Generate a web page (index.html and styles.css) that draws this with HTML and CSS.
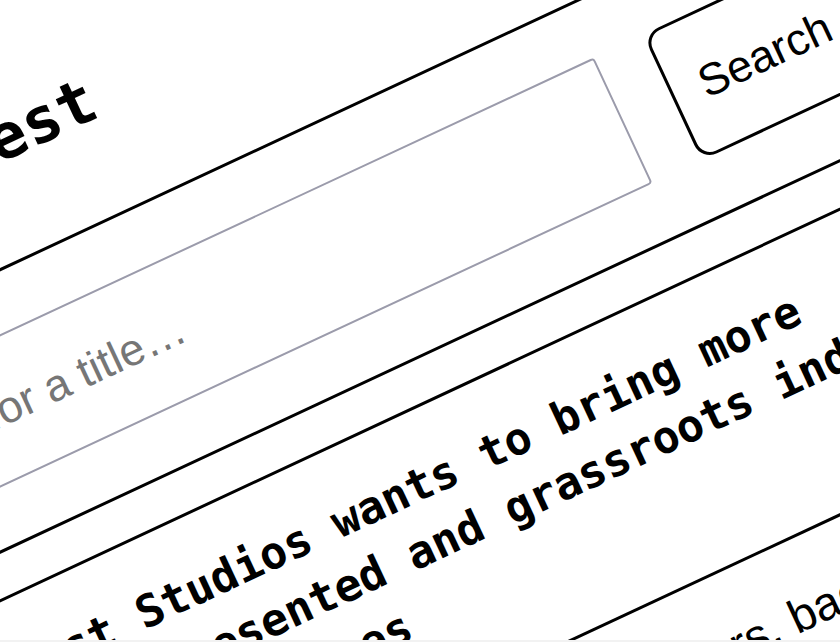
FILE: index.html
```html
<!DOCTYPE html>
<html lang="en">
<head>
<meta charset="utf-8">
<title>Indie Digest</title>
<link rel="stylesheet" href="styles.css">
</head>
<body>
<div class="stage">
  <header class="masthead">
    <h1 class="title">Indie Digest</h1>
  </header>
  <form class="search-card">
    <input class="search-input" type="text" placeholder="Search for a title…">
    <button class="search-btn" type="button">Search</button>
  </form>
  <article class="post-card">
    <h2 class="post-title">Stardust Studios wants to bring more widely represented and grassroots indie voices to PC games</h2>
    <p class="post-desc">This new fund offers young developers, backing and mentorship</p>
  </article>
</div>
</body>
</html>
```

FILE: styles.css
```css
html {
  background: #f2f2f2;
  overflow: hidden;
}

body {
  margin: 0;
  height: 640px;
  background: #fff;
  overflow: hidden;
  color: #000;
}

.stage {
  width: 1264px;
  padding-top: 89px;
  transform-origin: 0 0;
  transform: rotate(-25deg) translate(-435px, 0);
}

.title {
  margin: 0 0 77.5px;
  padding-left: 23px;
  font: 700 63px/76px "DejaVu Sans Mono", monospace;
}

.search-card {
  display: flex;
  gap: 54px;
  margin: 0 0 41px;
  padding: 57px 54px;
  border: 3px solid #000;
}

.search-input {
  width: 892px;
  height: 139px;
  box-sizing: border-box;
  margin: 0;
  padding: 0 33px;
  border: 2px solid #9b9bab;
  border-radius: 4px;
  font: 44.8px "Liberation Sans", Arial, sans-serif;
  color: #000;
  outline: none;
}

.search-input::placeholder {
  color: #767676;
}

.search-btn {
  width: 204px;
  height: 139px;
  box-sizing: border-box;
  margin: 0;
  padding: 0;
  border: 3px solid #000;
  border-radius: 17px;
  background: #fff;
  color: #000;
  font: 44.8px "Liberation Sans", Arial, sans-serif;
}

.post-card {
  padding: 40.5px 54px 0;
  border: 3px solid #000;
}

.post-title {
  max-width: 1100px;
  margin: 0 0 50.5px;
  font: 700 44.8px/61px "DejaVu Sans Mono", monospace;
}

.post-desc {
  margin: 0;
  padding-top: 45px;
  border-top: 3px solid #000;
  font: 47px "Liberation Sans", Arial, sans-serif;
}
```
